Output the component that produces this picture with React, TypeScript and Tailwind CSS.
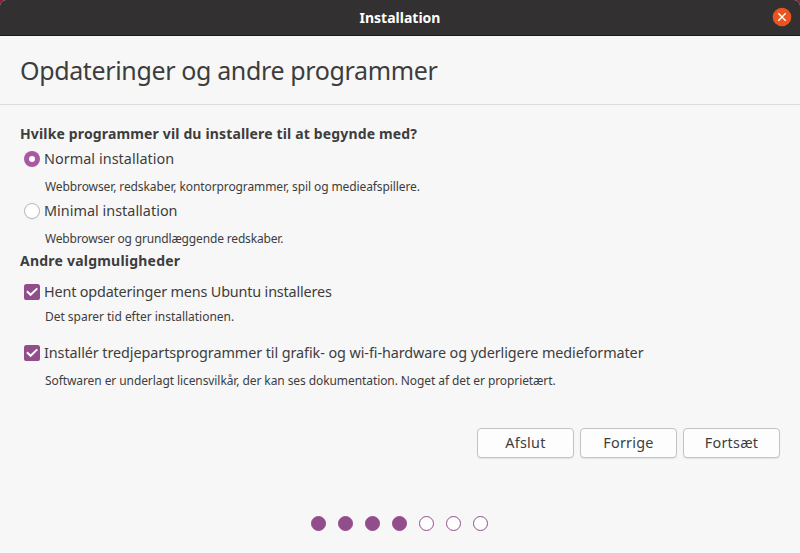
import React from "react";

function Label({ children, className = "" }: { children: React.ReactNode; className?: string }) {
  return <span className={`whitespace-nowrap ${className}`}>{children}</span>;
}

function Radio({ checked = false }: { checked?: boolean }) {
  return checked ? (
    <span className="flex size-4 shrink-0 items-center justify-center rounded-full bg-[#a859a1]">
      <span className="size-[6px] rounded-full bg-white" />
    </span>
  ) : (
    <span className="size-4 shrink-0 rounded-full border border-[#b9b9b9] bg-white shadow-[0_1px_1px_rgba(0,0,0,0.05)]" />
  );
}

function Check() {
  return (
    <svg className="size-4 shrink-0" viewBox="0 0 16 16" fill="none">
      <rect width="16" height="16" rx="2.6" fill="#924d8b" />
      <path d="M2.9 7.3 L6.6 10.8 L13.3 4.4" stroke="#fff" strokeWidth="2" />
    </svg>
  );
}

function Button({ children }: { children: React.ReactNode }) {
  return (
    <button className="flex h-[30px] w-[97px] items-center justify-center rounded-[4px] border border-[#c3c3c3] bg-[#fdfdfd] text-[14.4px] tracking-[0.25px] shadow-[0_1px_1px_rgba(0,0,0,0.08)]">
      {children}
    </button>
  );
}

export default function App() {
  return (
    <div className="h-[553px] w-[800px] overflow-hidden bg-[#8a1c34] font-['Noto_Sans',sans-serif] text-[#3d3d3d]">
      <div className="flex h-full flex-col overflow-hidden rounded-t-[6px] bg-[#f7f7f7]">
        <header className="grid h-9 shrink-0 grid-cols-[1fr_auto_1fr] items-center border-b border-[#1d1c1c] bg-[#333031] pr-2">
          <span />
          <Label className="pl-2 text-[14px] font-bold text-white">Installation</Label>
          <svg className="mb-px size-5 justify-self-end" viewBox="0 0 20 20" fill="none">
            <circle cx="10" cy="10" r="9.3" fill="#e95420" />
            <path d="M6.3 6.3 L13.7 13.7 M13.7 6.3 L6.3 13.7" stroke="#fff" strokeWidth="1.4" />
          </svg>
        </header>
        <div className="flex h-[69px] shrink-0 items-center border-b border-[#dcdcdc] px-5 pt-[2px]">
          <Label className="text-[25px] tracking-[-0.36px]">Opdateringer og andre programmer</Label>
        </div>
        <main className="flex flex-col px-5 pt-4">
          <div className="flex h-6 items-center">
            <Label className="text-[14px] font-bold tracking-[0.15px]">Hvilke programmer vil du installere til at begynde med?</Label>
          </div>
          <label className="mt-px flex h-[26px] items-center gap-1 pl-1">
            <Radio checked />
            <Label className="text-[14.4px] tracking-[0.05px]">Normal installation</Label>
          </label>
          <div className="flex h-[30px] items-center pl-[25px]">
            <Label className="text-[12px] tracking-[-0.1px]">Webbrowser, redskaber, kontorprogrammer, spil og medieafspillere.</Label>
          </div>
          <label className="flex h-[18px] items-center gap-1 pl-1">
            <Radio />
            <Label className="text-[14.4px] tracking-[0.02px]">Minimal installation</Label>
          </label>
          <div className="flex h-9 items-center pl-[25px] pt-[2px]">
            <Label className="text-[12px] tracking-[-0.16px]">Webbrowser og grundlæggende redskaber.</Label>
          </div>
          <div className="flex h-2 items-center">
            <Label className="text-[14px] font-bold tracking-[0.22px]">Andre valgmuligheder</Label>
          </div>
          <label className="mt-[19px] flex h-[18px] items-center gap-1 pl-1">
            <Check />
            <Label className="text-[14.4px] tracking-[-0.17px]">Hent opdateringer mens Ubuntu installeres</Label>
          </label>
          <div className="flex h-8 items-center pl-[25px]">
            <Label className="text-[12px] tracking-[-0.03px]">Det sparer tid efter installationen.</Label>
          </div>
          <label className="mt-2.5 flex h-5 items-center gap-1 pl-1">
            <Check />
            <Label className="text-[14.4px] tracking-[-0.08px]">Installér tredjepartsprogrammer til grafik- og wi-fi-hardware og yderligere medieformater</Label>
          </label>
          <div className="flex h-9 items-center pl-[25px]">
            <Label className="text-[12px] tracking-[-0.085px]">Softwaren er underlagt licensvilkår, der kan ses dokumentation. Noget af det er proprietært.</Label>
          </div>
          <div className="mt-[29px] flex justify-end gap-1.5">
            <Button>Afslut</Button>
            <Button>Forrige</Button>
            <Button>Fortsæt</Button>
          </div>
          <div className="mt-[58px] flex justify-center gap-3 pr-[2px]">
            {[1, 1, 1, 1, 0, 0, 0].map((filled, i) => (
              <span key={i} className={`size-[15px] rounded-full border border-[#924d8b] ${filled ? "bg-[#924d8b]" : "bg-white"}`} />
            ))}
          </div>
        </main>
      </div>
    </div>
  );
}
